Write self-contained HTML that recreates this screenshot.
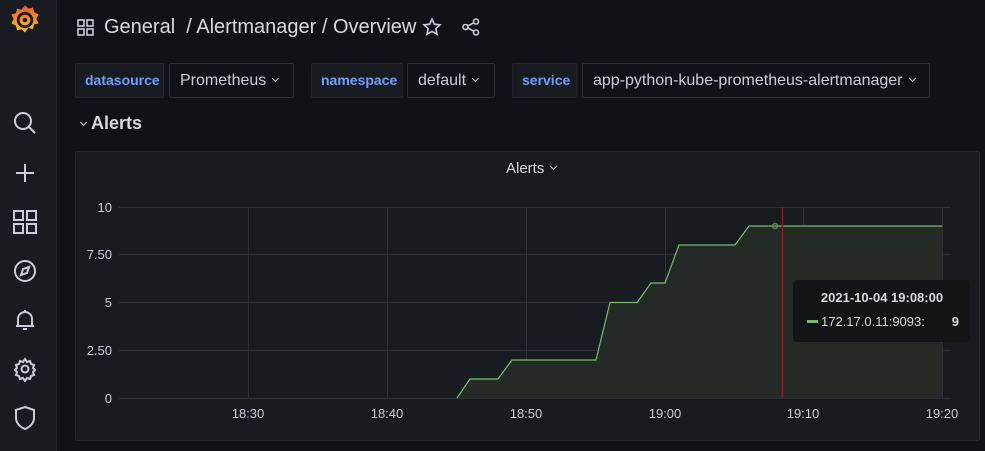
<!DOCTYPE html>
<html><head><meta charset="utf-8"><style>
*{margin:0;padding:0;box-sizing:border-box}
body{width:985px;height:451px;background:#111217;font-family:"Liberation Sans",sans-serif;color:#ccccdc;position:relative;overflow:hidden}
.side{position:absolute;left:0;top:0;width:57px;height:451px;background:#181b1f;border-right:1px solid #24262b}
.side svg{position:absolute;left:12px}
.t{position:absolute;white-space:nowrap}
.lbl{position:absolute;top:63px;height:35px;background:#181b1f;border:1px solid #24262b;border-radius:2px;color:#6e9fff;font-size:14px;line-height:33px;padding-left:9px;font-weight:bold}
.sel{position:absolute;top:63px;height:35px;background:#111217;border:1px solid #2c2f35;border-radius:2px;color:#ccccdc;font-size:16px;line-height:33px;padding-left:10px}
.chev{display:inline-block;width:6px;height:6px;border-right:1.5px solid #ccccdc;border-bottom:1.5px solid #ccccdc;transform:rotate(45deg);margin-left:7px;position:relative;top:-4px}
.panel{position:absolute;left:75px;top:151px;width:905px;height:290px;background:#181b1f;border:1px solid #24262b;border-radius:3px}
</style></head><body>
<div class="side">
<svg style="left:8px;top:3px" width="34" height="34" viewBox="0 0 30 30"><defs><linearGradient id="g" x1="0" y1="1" x2="0" y2="0"><stop offset="0" stop-color="#fcc419"/><stop offset="1" stop-color="#f05a28"/></linearGradient></defs><path d="M15 2l3 3 4-1 1 4 4 2-2 4 2 4-4 1-1 4-4-1-3 4-3-3-4 1-1-4-4-2 2-4-2-4 4-1 1-4 4 1z" fill="url(#g)"/><circle cx="15" cy="15" r="6" fill="none" stroke="#181b1f" stroke-width="2.5"/><circle cx="15" cy="15" r="2" fill="#181b1f"/></svg>
<svg style="top:110px" width="26" height="26" viewBox="0 0 26 26" fill="none" stroke="#ccccdc" stroke-width="2"><circle cx="11" cy="11" r="8"/><path d="M17 17l6 6"/></svg>
<svg style="top:160px" width="26" height="26" viewBox="0 0 26 26" fill="none" stroke="#ccccdc" stroke-width="2"><path d="M13 4v18M4 13h18"/></svg>
<svg style="top:209px" width="26" height="26" viewBox="0 0 26 26" fill="none" stroke="#ccccdc" stroke-width="2"><rect x="2" y="2" width="9" height="9"/><rect x="15" y="2" width="9" height="9"/><rect x="2" y="15" width="9" height="9"/><rect x="15" y="15" width="9" height="9"/></svg>
<svg style="top:258px" width="26" height="26" viewBox="0 0 26 26" fill="none" stroke="#ccccdc" stroke-width="2"><circle cx="13" cy="13" r="10"/><path d="M17 9l-2 6-6 2 2-6z"/></svg>
<svg style="top:307px" width="26" height="26" viewBox="0 0 26 26" fill="none" stroke="#ccccdc" stroke-width="2"><path d="M6 19V12a7 7 0 0 1 14 0v7zM4 19h18M11 22h4M13 3v2"/></svg>
<svg style="top:356px" width="26" height="26" viewBox="0 0 26 26" fill="none" stroke="#ccccdc" stroke-width="2"><circle cx="13" cy="13" r="3.5"/><path d="M13 3l2 3 3-1 1 3 3 1-1 3 2 2-2 2 1 3-3 1-1 3-3-1-2 3-2-3-3 1-1-3-3-1 1-3-2-2 2-2-1-3 3-1 1-3 3 1z"/></svg>
<svg style="top:405px" width="26" height="26" viewBox="0 0 26 26" fill="none" stroke="#ccccdc" stroke-width="2"><path d="M13 2l9 3v8c0 5-4 9-9 11-5-2-9-6-9-11V5z"/></svg>
</div>
<svg style="position:absolute;left:77px;top:19px" width="17" height="17" viewBox="0 0 17 17" fill="none" stroke="#ccccdc" stroke-width="1.6"><rect x="1" y="1" width="6" height="6"/><rect x="10" y="1" width="6" height="6"/><rect x="1" y="10" width="6" height="6"/><rect x="10" y="10" width="6" height="6"/></svg>
<div class="t" style="left:104px;top:16px;font-size:20px;color:#d8d9e0">General &nbsp;/ Alertmanager / Overview</div>
<svg style="position:absolute;left:422px;top:17px" width="20" height="20" viewBox="0 0 20 20" fill="none" stroke="#ccccdc" stroke-width="1.6"><path d="M10 2l2.4 5.2 5.6.6-4.2 3.8 1.2 5.6L10 14.4 5 17.2l1.2-5.6L2 7.8l5.6-.6z"/></svg>
<svg style="position:absolute;left:461px;top:17px" width="20" height="20" viewBox="0 0 20 20" fill="none" stroke="#ccccdc" stroke-width="1.6"><circle cx="15" cy="4.5" r="2.5"/><circle cx="4.5" cy="10" r="2.5"/><circle cx="15" cy="15.5" r="2.5"/><path d="M7 8.8l5.8-3M7 11.2l5.8 3"/></svg>
<div class="lbl" style="left:75px;width:89px">datasource</div>
<div class="sel" style="left:169px;width:125px">Prometheus<span class="chev" style="width:5px;height:5px"></span></div>
<div class="lbl" style="left:311px;width:92px">namespace</div>
<div class="sel" style="left:407px;width:88px">default<span class="chev" style="width:5px;height:5px"></span></div>
<div class="lbl" style="left:512px;width:65px">service</div>
<div class="sel" style="left:582px;width:348px">app-python-kube-prometheus-alertmanager<span class="chev" style="width:5px;height:5px"></span></div>
<div class="t" style="left:80px;top:113px;font-size:18px;font-weight:bold;color:#d8d9e0"><span class="chev" style="width:5px;height:5px;margin:0 5px 0 1px"></span>Alerts</div>
<div class="panel"></div>
<div class="t" style="left:506px;top:160px;font-size:15px;color:#d8d9e0">Alerts<span class="chev" style="width:5px;height:5px"></span></div>
<svg style="position:absolute;left:0;top:0" width="985" height="451">
<g stroke="#2f3137" stroke-width="1">
<path d="M119 207.5H951M119 254.5H951M119 302.5H951M119 350.5H951M119 398.5H951"/>
<path d="M248.5 207V398M387.5 207V398M526.5 207V398M665.5 207V398M803.5 207V398M942.5 207V398"/>
</g>
<path d="M457 398L470 379H498L512 360H596L610 302.5H637L651 283H665L679 245H735L749 226H942V398Z" fill="#242a25"/>
<path d="M457 398L470 379H498L512 360H596L610 302.5H637L651 283H665L679 245H735L749 226H942" fill="none" stroke="#73bf69" stroke-width="1.2"/>
<line x1="782.5" y1="207" x2="782.5" y2="398" stroke="#8a1a1a" stroke-width="1.5"/>
<circle cx="775" cy="226" r="2.5" fill="none" stroke="#5a8a52" stroke-width="1.5"/>
<g fill="#ccccdc" font-size="13" font-family="Liberation Sans" text-anchor="end">
<text x="112" y="212">10</text><text x="112" y="259">7.50</text><text x="112" y="307">5</text><text x="112" y="355">2.50</text><text x="112" y="403">0</text>
</g>
<g fill="#ccccdc" font-size="13" font-family="Liberation Sans" text-anchor="middle">
<text x="248" y="418">18:30</text><text x="387" y="418">18:40</text><text x="526" y="418">18:50</text><text x="665" y="418">19:00</text><text x="803" y="418">19:10</text><text x="942" y="418">19:20</text>
</g>
<rect x="793" y="280" width="177" height="62" rx="4" fill="#141517"/>
<text x="882" y="302" fill="#d8d9e0" font-size="13" font-weight="bold" font-family="Liberation Sans" text-anchor="middle">2021-10-04 19:08:00</text>
<rect x="807" y="320" width="11" height="3" fill="#73bf69"/>
<text x="821" y="326" fill="#d8d9e0" font-size="13" font-family="Liberation Sans">172.17.0.11:9093:</text>
<text x="959" y="326" fill="#d8d9e0" font-size="13" font-weight="bold" font-family="Liberation Sans" text-anchor="end">9</text>
</svg>
</body></html>
